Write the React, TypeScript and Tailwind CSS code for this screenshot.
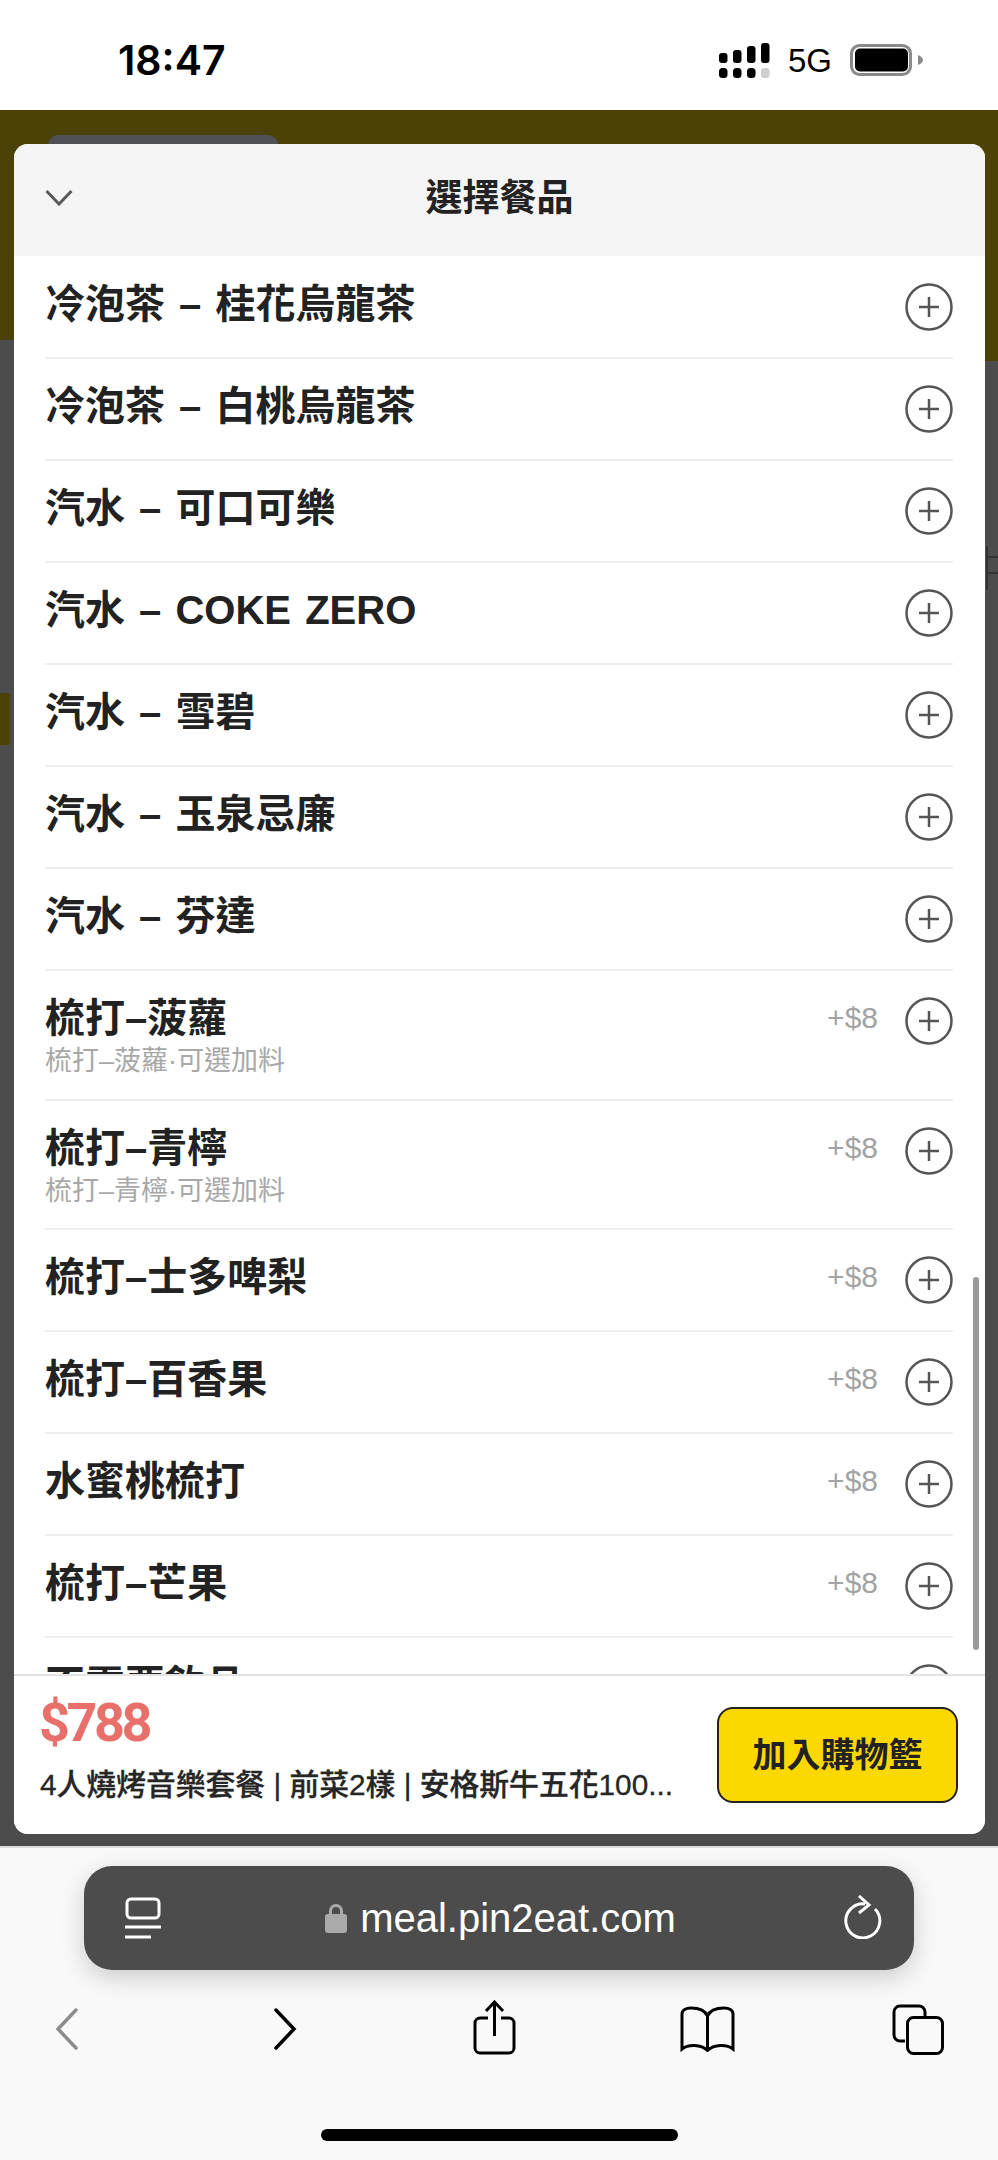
import React from "react";

const sans = "font-['Liberation_Sans','Noto_Sans_CJK_TC',sans-serif]";

type Row = { name: string; sub?: string; price?: string };
const rows: Row[] = [
  { name: "冷泡茶 – 桂花烏龍茶" },
  { name: "冷泡茶 – 白桃烏龍茶" },
  { name: "汽水 – 可口可樂" },
  { name: "汽水 – COKE ZERO" },
  { name: "汽水 – 雪碧" },
  { name: "汽水 – 玉泉忌廉" },
  { name: "汽水 – 芬達" },
  { name: "梳打–菠蘿", sub: "梳打–菠蘿·可選加料", price: "+$8" },
  { name: "梳打–青檸", sub: "梳打–青檸·可選加料", price: "+$8" },
  { name: "梳打–士多啤梨", price: "+$8" },
  { name: "梳打–百香果", price: "+$8" },
  { name: "水蜜桃梳打", price: "+$8" },
  { name: "梳打–芒果", price: "+$8" },
  { name: "不需要飲品" },
];

function Plus() {
  return (
    <svg width="48" height="48" viewBox="0 0 48 48" fill="none" stroke="#555" strokeWidth="2.5" className="shrink-0 mt-[2px]">
      <circle cx="24" cy="24" r="22.5" />
      <path d="M24 14v20M14 24h20" />
    </svg>
  );
}

function Signal() {
  const bars = [
    [0, 10, 10],
    [14, 7, 13],
    [28, 3, 17],
    [42, 0, 20],
  ];
  return (
    <svg width="51" height="35" viewBox="0 0 51 35" className="shrink-0">
      {bars.map(([x, y, h]) => (
        <rect key={x} x={x} y={y} width="8.5" height={h} rx="3" fill="#000" />
      ))}
      {[0, 14, 28].map((x) => (
        <rect key={x} x={x} y="25" width="8.5" height="10" rx="3.5" fill="#000" />
      ))}
      <rect x="42" y="25" width="8.5" height="10" rx="3" fill="#cfcfcf" />
    </svg>
  );
}

function Battery() {
  return (
    <svg width="73" height="32" viewBox="0 0 73 32" className="shrink-0">
      <rect x="1.5" y="1.5" width="59" height="29" rx="8" fill="none" stroke="#8a8a8a" strokeWidth="3" />
      <rect x="5" y="4.5" width="53" height="23" rx="5" fill="#000" />
      <path d="M68 11c3 1 5 3 5 5s-2 4-5 5z" fill="#8a8a8a" />
    </svg>
  );
}

function Item({ r }: { r: Row }) {
  return (
    <div className={`flex justify-between border-b-2 border-[#eeeeee] pt-[24px] ${r.sub ? "h-[129.5px]" : "h-[102px]"}`}>
      <div className="min-w-0">
        <div className="text-[40px] leading-[46px] font-bold text-[#222222] whitespace-nowrap [word-spacing:3px]">{r.name}</div>
        {r.sub && <div className="text-[27px] leading-[30px] text-[#a8a8a8] whitespace-nowrap mt-[5px]">{r.sub}</div>}
      </div>
      <div className="flex items-start gap-[27px]">
        {r.price && <div className="text-[30px] leading-[40px] mt-[3px] text-[#a3a3a3]">{r.price}</div>}
        <Plus />
      </div>
    </div>
  );
}

export default function App() {
  return (
    <div className={`w-[998px] h-[2160px] flex flex-col overflow-hidden bg-[#f9f9f9] ${sans}`}>
      {/* status bar */}
      <div className="h-[110px] shrink-0 bg-white flex items-center justify-between pl-[118px] pr-[75px] pt-[10px]">
        <div className="text-[41px] leading-none font-semibold text-black font-['Inter',sans-serif]">18:47</div>
        <div className="flex items-center gap-[18px]">
          <Signal />
          <div className="text-[33px] leading-none text-black">5G</div>
          <Battery />
        </div>
      </div>

      {/* page behind the sheet */}
      <div className="relative h-[1738px] shrink-0 bg-[#4c4c4c] border-b-2 border-[#dcdcdc] overflow-hidden">
        <div className="h-[230px] bg-[#4b4207]" />
        <div className="absolute right-0 top-0 w-[20px] h-[251px] bg-[#4b4207]" />
        <div className="absolute left-0 top-[583px] w-[10px] h-[52px] rounded-r-[2px] bg-[#4b4207]" />
        <div className="absolute left-[48px] top-[25px] w-[230px] h-[20px] rounded-t-[10px] bg-[#4f5157]" />
        <div className="absolute right-0 top-[436px] w-[12px] h-[44px] border-l-2 border-[#333333]">
          <div className="h-[2px] mt-[10px] bg-[#333333]" />
          <div className="h-[2px] mt-[14px] bg-[#333333]" />
        </div>

        {/* sheet */}
        <div className="absolute left-[14px] right-[13px] top-[34px] h-[1690px] rounded-[14px] bg-white overflow-hidden flex flex-col">
          <div className="h-[112px] shrink-0 bg-[#f5f5f5] relative flex items-center justify-center">
            <svg width="28" height="17" viewBox="0 0 28 17" fill="none" stroke="#5a5a5a" strokeWidth="3" className="absolute left-[31px] top-[45px]">
              <path d="M1.5 2L14 15 26.5 2" />
            </svg>
            <div className="text-[37px] leading-none font-bold text-[#222222] mt-[-4px]">選擇餐品</div>
          </div>
          <div className="relative flex-1 min-h-0 overflow-hidden">
            <div className="pl-[31px] pr-[32px] pt-[1px]">
              {rows.map((r) => (
                <Item key={r.name} r={r} />
              ))}
            </div>
            <div className="absolute right-[6px] top-[1021px] w-[6px] h-[373px] rounded-full bg-[#9b9b9b]" />
          </div>
          <div className="h-[160px] shrink-0 bg-white border-t-2 border-[#e4e4e4] flex items-start justify-between pl-[26px] pr-[27px]">
            <div className="min-w-0 pt-[16px]">
              <div className="text-[54px] leading-[62px] text-[#e96f6b] font-bold tracking-[-3.5px] ml-[-1px] font-['Roboto',sans-serif]">$788</div>
              <div className="text-[29.8px] leading-[36px] mt-[13px] text-[#262626] font-medium whitespace-nowrap [-webkit-text-stroke:0.3px_#262626]">4人燒烤音樂套餐 | 前菜2樣 | 安格斯牛五花100...</div>
            </div>
            <div className="mt-[31px] w-[241px] h-[96px] shrink-0 rounded-[16px] bg-[#fbd800] border-2 border-[#222222] flex items-center justify-center text-[34px] font-bold text-[#222222]">
              加入購物籃
            </div>
          </div>
        </div>
      </div>

      {/* safari bar */}
      <div className="relative flex-1 bg-[#f9f9f9]">
        <div className="mx-[84px] mt-[18px] h-[104px] pl-[3px] rounded-[28px] bg-[#4c4c4c] shadow-[0_8px_24px_rgba(0,0,0,0.18)] relative flex items-center justify-center gap-[13px]">
          <svg width="36" height="44" viewBox="0 0 36 44" fill="none" stroke="#fff" strokeWidth="3" className="absolute left-[41px] top-[31px]">
            <rect x="2" y="2" width="32" height="19" rx="4" />
            <path d="M0 30h36M0 40h26" />
          </svg>
          <svg width="22" height="30" viewBox="0 0 22 30">
            <path d="M5.5 14V8a5.5 5.5 0 0 1 11 0v6" fill="none" stroke="#aaaaaa" strokeWidth="3" />
            <rect x="0" y="11" width="22" height="19" rx="3" fill="#aaaaaa" />
          </svg>
          <div className="text-[40px] leading-none text-white">meal.pin2eat.com</div>
          <svg width="40" height="44" viewBox="0 0 40 44" fill="none" stroke="#fff" strokeWidth="3" className="absolute right-[30px] top-[29px]">
            <path d="M21 9A17 17 0 1 0 31 14" />
            <path d="M15 1l10 9-10 8" />
          </svg>
        </div>
        <div className="mt-[30px] pl-[55px] flex items-center h-[58px]">
          <svg width="23" height="42" viewBox="0 0 23 42" fill="none" stroke="#8c8c8c" strokeWidth="3.5" strokeLinecap="round" className="shrink-0"><path d="M21 2L3 21l18 19" /></svg>
          <svg width="23" height="42" viewBox="0 0 23 42" fill="none" stroke="#000" strokeWidth="3.5" strokeLinecap="round" className="ml-[196px] shrink-0"><path d="M2 2l18 19L2 40" /></svg>
          <svg width="43" height="55" viewBox="0 0 43 55" fill="none" stroke="#000" strokeWidth="3" className="ml-[176px] mt-[-3px] shrink-0">
            <path d="M15 18H7a5 5 0 0 0-5 5v25a5 5 0 0 0 5 5h29a5 5 0 0 0 5-5V23a5 5 0 0 0-5-5h-8" />
            <path d="M21.5 36V2M13 11l8.500-9 8.500 9" />
          </svg>
          <svg width="55" height="46" viewBox="0 0 55 46" fill="none" stroke="#000" strokeWidth="3" className="ml-[164px] shrink-0">
            <path d="M27.500 10C25 4 19 2 11 2 6 2 2 4 2 8v35c6-5 19-5 25.500 1.500C34 38 47 38 53 43V8c0-4-4-6-9-6-8 0-14 2-16.500 8zM27.500 10v34" />
          </svg>
          <svg width="52" height="51" viewBox="0 0 52 51" fill="none" stroke="#000" strokeWidth="3" className="ml-[157px] shrink-0">
            <path d="M13 37H8a6 6 0 0 1-6-6V8a6 6 0 0 1 6-6h19a6 6 0 0 1 6 6v4" />
            <rect x="15.500" y="13.500" width="35" height="36" rx="6" />
          </svg>
        </div>
        <div className="absolute left-[321px] top-[281px] w-[357px] h-[12px] rounded-full bg-black" />
      </div>
    </div>
  );
}
